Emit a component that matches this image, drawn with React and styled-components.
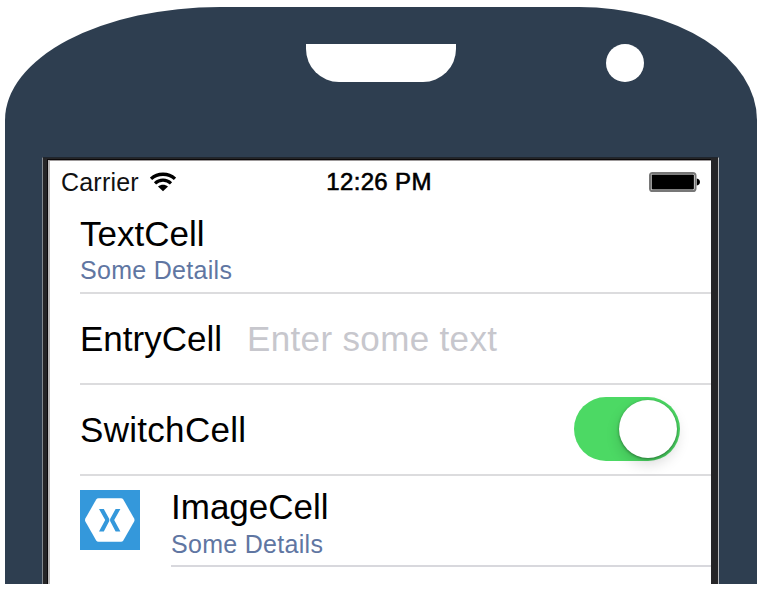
import React from "react";
import styled, { createGlobalStyle } from "styled-components";

const GlobalStyle = createGlobalStyle`
  * { box-sizing: border-box; }
  body {
    margin: 0;
    background: #fff;
    font-family: "Liberation Sans", Arial, sans-serif;
    color: #000;
    overflow: hidden;
  }
`;

const Page = styled.main`
  height: 591px;
  padding: 7px 4px 7px 5px;
`;

const Phone = styled.div`
  width: 752px;
  height: 577px;
  display: flex;
  flex-direction: column;
  overflow: hidden;
  background: #2e3e50;
  border-radius: 215px 178px 0 0 / 113px 113px 0 0;
`;

const PhoneTop = styled.header`
  height: 150px;
  flex: none;
  padding: 37px 0 0 301px;
  display: flex;
  align-items: flex-start;
  gap: 150px;
`;

const Speaker = styled.div`
  width: 150px;
  height: 38px;
  background: #fff;
  border-radius: 0 0 33px 33px;
`;

const Camera = styled.div`
  width: 38px;
  height: 38px;
  background: #fff;
  border-radius: 50%;
`;

const Bezel = styled.div`
  width: 677px;
  flex: 1;
  margin-left: 37px;
  padding: 2px 7px 0 5px;
  display: flex;
  background: #252527;
  border-left: 1px solid #83898f;
  border-right: 1px solid #b9bbbd;
  border-top: 1px solid #20262e;
`;

const Screen = styled.section`
  flex: 1;
  background: #fff;
  border-left: 2px solid #bcbaba;
  border-top: 1px solid #9d999a;
  box-shadow: 0 0 0 1px #0b090b;
  clip-path: inset(-1px 0 0 -1px);
`;

const StatusBar = styled.div`
  height: 41px;
  padding: 1px 11px 0;
  display: grid;
  grid-template-columns: 1fr auto 1fr;
  align-items: center;
`;

const Carrier = styled.div`
  display: flex;
  align-items: center;
  gap: 11px;
  font-size: 25px;
  line-height: 40px;
  letter-spacing: 0.2px;
  color: #111;
`;

const Clock = styled.div`
  margin-right: 3px;
  font-size: 24px;
  line-height: 40px;
  letter-spacing: 0.35px;
  -webkit-text-stroke: 0.6px #000;
`;

const BatterySlot = styled.div`
  display: flex;
  justify-content: flex-end;
`;

const Cell = styled.div`
  height: ${(p) => p.$height || 91}px;
  margin-left: 30px;
  padding-right: 31px;
  display: flex;
  align-items: center;
  border-bottom: 2px solid #dcdcde;
`;

const ImageRow = styled.div`
  display: flex;
  padding-left: 30px;
`;

const ImageSlot = styled.div`
  width: 91px;
  flex: none;
  padding-top: 14px;
`;

const ImageContent = styled.div`
  flex: 1;
  height: 91px;
  border-bottom: 2px solid #d8d8dd;
  padding-top: 11px;
`;

const TextStack = styled.div`
  padding-top: 5px;
`;

const Title = styled.div`
  font-size: 35px;
  line-height: 40px;
  letter-spacing: ${(p) => p.$spacing || 0}px;
  white-space: nowrap;
`;

const Detail = styled.div`
  font-size: 25px;
  line-height: 30px;
  margin-top: ${(p) => p.$gap}px;
  letter-spacing: 0.3px;
  color: #6076a2;
  white-space: nowrap;
`;

const Placeholder = styled.div`
  margin-left: 25px;
  font-size: 35px;
  line-height: 40px;
  letter-spacing: 0.35px;
  color: #c7c7cd;
  white-space: nowrap;
`;

const Switch = styled.div`
  width: 106px;
  height: 64px;
  margin: 0 0 2px auto;
  padding: 3px;
  display: flex;
  justify-content: flex-end;
  border-radius: 32px;
  background: #4cd964;
`;

const Knob = styled.div`
  width: 58px;
  height: 58px;
  border-radius: 50%;
  background: #fff;
  box-shadow: 0 1px 3px rgba(0, 0, 0, 0.4), 0 6px 14px rgba(0, 0, 0, 0.15);
`;

const WifiIcon = () => (
  <svg width="26" height="20" viewBox="0 0 26 20" fill="none" stroke="#000">
    <path d="M1 6.9C7.6 .7 18.4 .7 25 6.9" strokeWidth="3.3" />
    <path d="M5 11.3C9.5 7 16.5 7 21 11.3" strokeWidth="3.2" />
    <path d="M8 14.5C11 12.1 15 12.1 18 14.5L13 19.2Z" fill="#000" stroke="none" />
  </svg>
);

const BatteryIcon = () => (
  <svg width="51" height="20" viewBox="0 0 51 20">
    <rect x="1" y="1" width="45.5" height="18" rx="2.6" fill="#fff" stroke="#777" strokeWidth="2" />
    <rect x="2.6" y="2.6" width="42.3" height="14.8" rx="1" fill="#000" />
    <path d="M47.8 6.5C52 7 52 13 47.8 13.5Z" fill="#000" />
  </svg>
);

const LogoIcon = () => (
  <svg width="60" height="60" viewBox="0 0 60 60">
    <rect width="60" height="60" fill="#3498db" />
    <path
      d="M18.5 8.3H41Q42.5 8.3 43.3 9.6L54 28.2Q55 30 54 31.8L43.3 50.4Q42.5 51.7 41 51.7H18.5Q17 51.7 16.2 50.4L5.5 31.8Q4.5 30 5.5 28.2L16.2 9.6Q17 8.3 18.5 8.3Z"
      fill="#fff"
    />
    <path
      d="M19 19H23.8L29.3 29.1V30.9L23.8 41.5H19L25.2 30ZM40.4 19H35.6L30.1 29.1V30.9L35.6 41.5H40.4L34.2 30Z"
      fill="#3498db"
    />
  </svg>
);

export default function App() {
  return (
    <>
      <GlobalStyle />
      <Page>
        <Phone>
          <PhoneTop>
            <Speaker />
            <Camera />
          </PhoneTop>
          <Bezel>
            <Screen>
              <StatusBar>
                <Carrier>
                  Carrier
                  <WifiIcon />
                </Carrier>
                <Clock>12:26 PM</Clock>
                <BatterySlot>
                  <BatteryIcon />
                </BatterySlot>
              </StatusBar>
              <Cell $height={92}>
                <TextStack>
                  <Title>TextCell</Title>
                  <Detail $gap={1}>Some Details</Detail>
                </TextStack>
              </Cell>
              <Cell>
                <Title>EntryCell</Title>
                <Placeholder>Enter some text</Placeholder>
              </Cell>
              <Cell>
                <Title $spacing={0.3}>SwitchCell</Title>
                <Switch role="switch" aria-checked="true">
                  <Knob />
                </Switch>
              </Cell>
              <ImageRow>
                <ImageSlot>
                  <LogoIcon />
                </ImageSlot>
                <ImageContent>
                  <Title>ImageCell</Title>
                  <Detail $gap={2}>Some Details</Detail>
                </ImageContent>
              </ImageRow>
            </Screen>
          </Bezel>
        </Phone>
      </Page>
    </>
  );
}
